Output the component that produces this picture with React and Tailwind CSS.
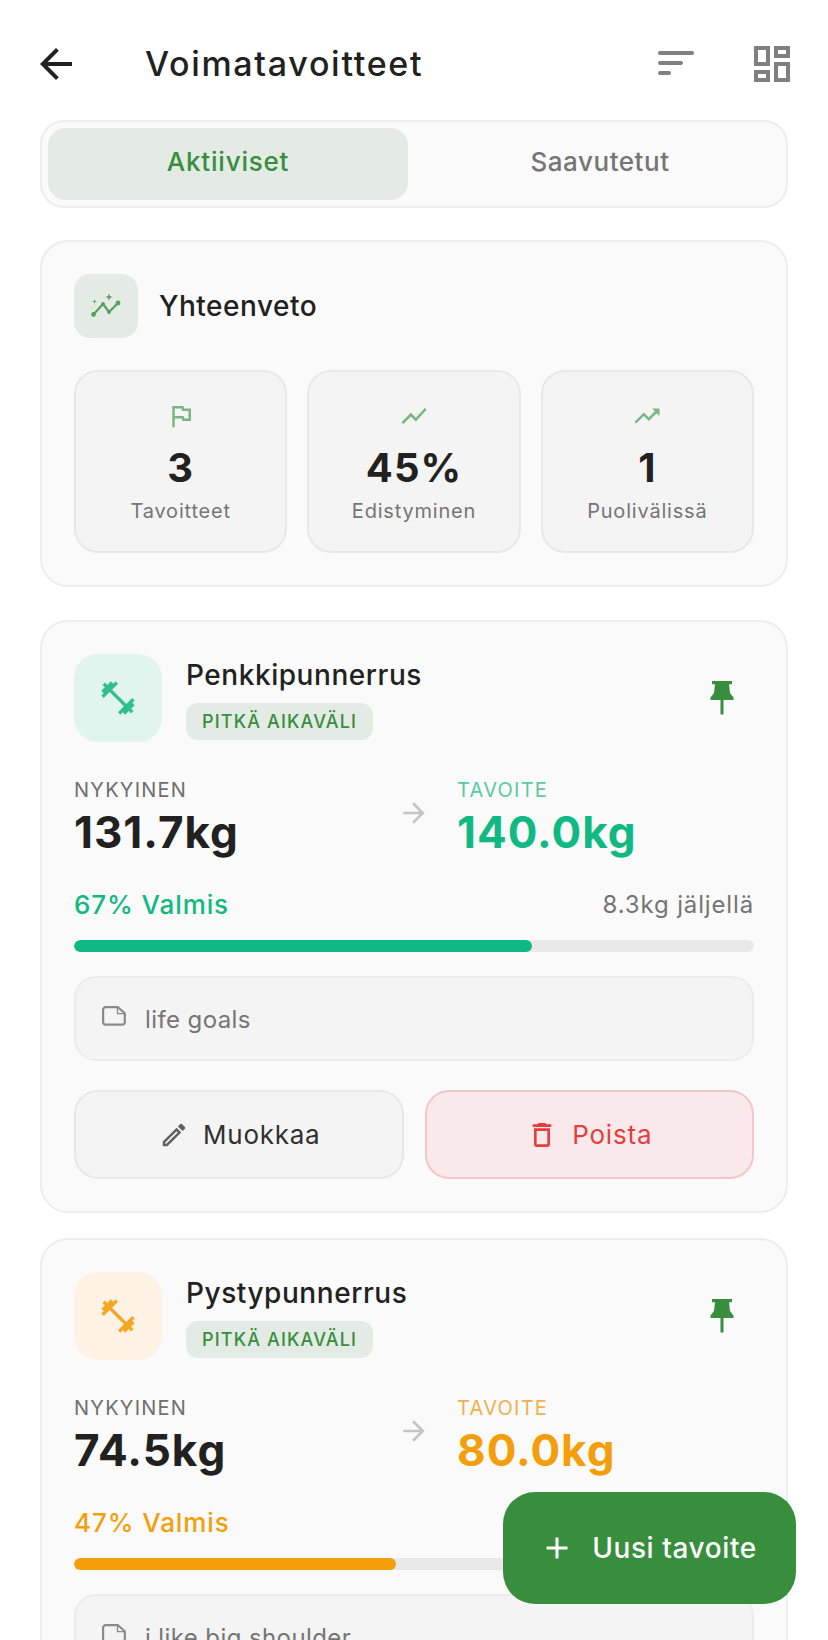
import React from "react";
import { MdArrowBack, MdFitnessCenter, MdOutlineEdit, MdAdd, MdOutlineDeleteOutline, MdShowChart, MdTrendingUp, MdOutlineFlag } from "react-icons/md";

function SortIcon() {
  return (
    <svg width="36" height="28" viewBox="0 0 36 28" className="text-[#808080]">
      <g stroke="currentColor" strokeWidth="4" strokeLinecap="round">
        <line x1="2" y1="3" x2="34" y2="3" />
        <line x1="2" y1="13" x2="23" y2="13" />
        <line x1="2" y1="23" x2="11" y2="23" />
      </g>
    </svg>
  );
}

function DashIcon() {
  return (
    <svg width="36" height="36" viewBox="0 0 36 36" className="text-[#808080]">
      <g fill="none" stroke="currentColor" strokeWidth="4">
        <rect x="2" y="2" width="12" height="16" />
        <rect x="22" y="2" width="12" height="8" />
        <rect x="2" y="26" width="12" height="8" />
        <rect x="22" y="18" width="12" height="16" />
      </g>
    </svg>
  );
}

function NoteIcon() {
  return (
    <svg width="24" height="20" viewBox="0 0 24 20" className="text-[#8a8a8a]">
      <path d="M3.5 1.2H16L22.8 7.2V16.2a2.4 2.4 0 0 1-2.4 2.4H3.5a2.4 2.4 0 0 1-2.4-2.4V3.6a2.4 2.4 0 0 1 2.4-2.4Z" fill="none" stroke="currentColor" strokeWidth="2.2" strokeLinejoin="round" />
      <path d="M15.5 1.5V7.6H22.5" fill="none" stroke="currentColor" strokeWidth="1.4" />
    </svg>
  );
}

function GraphIcon() {
  return (
    <svg width="32" height="32" viewBox="0 0 32 32" className="text-[#57a05d]">
      <polyline points="3,25 13,14 19,22 28,13" fill="none" stroke="currentColor" strokeWidth="2.2" strokeLinejoin="round" />
      <g fill="currentColor">
        <circle cx="3.5" cy="24.5" r="2.4" />
        <circle cx="13" cy="14" r="1.9" />
        <circle cx="19" cy="22" r="1.9" />
        <circle cx="28" cy="13" r="2.4" />
        <path d="M19 3.5L20 6L22.5 7L20 8L19 10.5L18 8L15.5 7L18 6Z" />
        <path d="M4.5 9L5.1 10.9L7 11.5L5.1 12.1L4.5 14L3.9 12.1L2 11.5L3.9 10.9Z" />
      </g>
    </svg>
  );
}

function PinIcon() {
  return (
    <svg width="24" height="34" viewBox="0 0 24 34" className="text-[#388e3c]">
      <path d="M2 0H22V3.2H19L20 12L23.5 16.5V19H13.5V33.5H10.5V19H.5V16.5L4 12L5 3.2H2Z" fill="currentColor" />
    </svg>
  );
}

function Stat({ icon, value, label }) {
  return (
    <div className="flex h-[183px] flex-col items-center rounded-[24px] border-2 border-[#e8e8e8] bg-[#f4f4f4] pt-[30px]">
      <div className="flex h-[28px] items-center justify-center text-[#7cb582]">{icon}</div>
      <div className="mt-[14px] text-[40px] font-bold leading-[48px] tracking-[1px] text-[#212121]">{value}</div>
      <div className="mt-[5px] text-[20px] leading-[28px] tracking-[0.8px] text-[#757575]">{label}</div>
    </div>
  );
}

function Goal({ name, accent, accentSoft, current, target, pct, fillClass, remaining, note, iconClass, boxClass }) {
  return (
    <div className="rounded-[28px] border-2 border-[#ededed] bg-[#fafafa] p-[32px]">
      <div className="flex items-start">
        <div className={`flex h-[88px] w-[88px] items-center justify-center rounded-[24px] ${boxClass}`}>
          <MdFitnessCenter size={40} className={iconClass} />
        </div>
        <div className="ml-[24px] flex-1">
          <div className="mt-[3px] text-[28px] font-medium leading-[36px] tracking-[0.55px] text-[#212121]">{name}</div>
          <div className="mt-[10px] inline-block h-[37px] rounded-[12px] bg-[#e3ebe4] px-[16px] text-[18px] font-medium leading-[37px] tracking-[1.15px] text-[#388e3c]">PITKÄ AIKAVÄLI</div>
        </div>
        <div className="mt-[27px] mr-[20px]"><PinIcon /></div>
      </div>
      <div className="mt-[35px] flex">
        <div className="w-[297px]">
          <div className="text-[20px] font-normal leading-[26px] tracking-[1.25px] text-[#6f6f6f]">NYKYINEN</div>
          <div className="mt-[3px] text-[44px] font-bold leading-[52px] tracking-[1px] text-[#212121]">{current}</div>
        </div>
        <div className="w-[86px] pl-[27px] pt-[20px] text-[#c4c4c4]"><MdArrowBack size={32} className="rotate-180" /></div>
        <div>
          <div className={`text-[20px] font-normal leading-[26px] tracking-[1.25px] ${accentSoft}`}>TAVOITE</div>
          <div className={`mt-[3px] text-[44px] font-bold leading-[52px] tracking-[1px] ${accent}`}>{target}</div>
        </div>
      </div>
      <div className="mt-[30px] flex items-center justify-between">
        <div className={`text-[26px] font-medium leading-[34px] tracking-[0.9px] ${accent}`}>{pct}% Valmis</div>
        <div className="text-[24px] leading-[34px] tracking-[0.85px] text-[#757575]">{remaining}</div>
      </div>
      <div className="mt-[18px] h-[12px] overflow-hidden rounded-[6px] bg-[#e9e9e9]">
        <div className={`h-full rounded-[6px] ${fillClass}`} style={{ width: `${pct === 67 ? 67.3 : 47.4}%` }} />
      </div>
      <div className="mt-[24px] flex h-[85px] items-start rounded-[22px] border-2 border-[#ececec] bg-[#f4f4f4] pl-[26px]">
        <div className="mt-[28px]"><NoteIcon /></div>
        <div className="ml-[19px] mt-[25px] text-[24px] leading-[34px] tracking-[0.4px] text-[#757575]">{note}</div>
      </div>
      <div className="mt-[29px] grid grid-cols-2 gap-[21px]">
        <div className="flex h-[89px] items-center justify-center gap-[14px] rounded-[24px] border-2 border-[#e8e8e8] bg-[#f4f4f4] pl-[2px]">
          <MdOutlineEdit size={30} className="text-[#616161]" />
          <span className="text-[26px] font-normal tracking-[0.75px] text-[#303030]">Muokkaa</span>
        </div>
        <div className="flex h-[89px] items-center justify-center gap-[14px] rounded-[24px] border-2 border-[#f5c6c8] bg-[#f9e9ea] text-[#e53e3e]">
          <MdOutlineDeleteOutline size={32} />
          <span className="text-[26px] font-normal tracking-[0.8px]">Poista</span>
        </div>
      </div>
    </div>
  );
}

export default function App() {
  return (
    <div className="relative h-[1640px] w-[828px] overflow-hidden bg-white" style={{ fontFamily: "Inter, 'Noto Sans', sans-serif" }}>
      <div className="flex h-[120px] items-start px-[40px]">
        <div className="mt-[40px] w-[105px] text-[#212121]"><MdArrowBack size={48} className="-ml-[8px]" /></div>
        <div className="mt-[41px] flex-1 text-[34px] font-medium leading-[46px] tracking-[1.7px] text-[#212121]">Voimatavoitteet</div>
        <div className="mr-[2px] mt-[50px]"><SortIcon /></div>
        <div className="ml-[58px] mr-[-2px] mt-[46px]"><DashIcon /></div>
      </div>

      <div className="mx-[40px] w-[748px]">
        <div className="flex h-[88px] rounded-[24px] border-2 border-[#ededed] bg-[#fafafa] p-[6px]">
          <div className="flex w-[360px] items-center justify-center rounded-[18px] bg-[#e3ebe4] pb-[6px] text-[26px] font-medium tracking-[0.8px] text-[#388e3c]">Aktiiviset</div>
          <div className="flex flex-1 items-center justify-center pb-[6px] pl-[12px] text-[26px] font-medium tracking-[0.55px] text-[#757575]">Saavutetut</div>
        </div>

        <div className="mt-[32px] h-[347px] rounded-[28px] border-2 border-[#ededed] bg-[#fafafa] p-[32px]">
          <div className="flex items-center">
            <div className="flex h-[64px] w-[64px] items-center justify-center rounded-[16px] bg-[#e3ebe4]">
              <GraphIcon />
            </div>
            <div className="ml-[21px] text-[28px] font-medium tracking-[0.5px] text-[#212121]">Yhteenveto</div>
          </div>
          <div className="mt-[32px] grid grid-cols-3 gap-[20px]">
            <Stat icon={<MdOutlineFlag size={30} />} value="3" label="Tavoitteet" />
            <Stat icon={<MdShowChart size={30} />} value="45%" label="Edistyminen" />
            <Stat icon={<MdTrendingUp size={30} />} value="1" label="Puolivälissä" />
          </div>
        </div>

        <div className="mt-[33px] flex flex-col gap-[25px]">
          <Goal name="Penkkipunnerrus" current="131.7kg" target="140.0kg" pct={67} remaining="8.3kg jäljellä" note="life goals"
            accent="text-[#10b981]" accentSoft="text-[#58caa5]" fillClass="bg-[#10b981]" iconClass="text-[#2fbf8f]" boxClass="bg-[#e2f4ee]" />
          <Goal name="Pystypunnerrus" current="74.5kg" target="80.0kg" pct={47} remaining="5.5kg jäljellä" note="i like big shoulder"
            accent="text-[#f59e0b]" accentSoft="text-[#f0b04f]" fillClass="bg-[#f59e0b]" iconClass="text-[#f5a623]" boxClass="bg-[#fdf2e3]" />
        </div>
      </div>

      <div className="absolute left-[503px] top-[1492px] flex h-[112px] w-[293px] items-center justify-center gap-[17px] rounded-[32px] bg-[#388e3c] pr-[3px] text-white">
        <MdAdd size={36} />
        <span className="text-[28px] font-medium tracking-[0.6px]">Uusi tavoite</span>
      </div>
    </div>
  );
}
